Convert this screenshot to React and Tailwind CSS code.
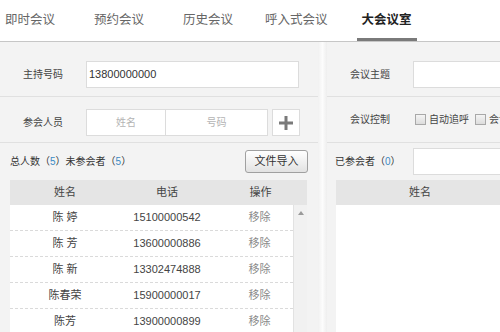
import React from "react";

const FONT = { fontFamily: '"Liberation Sans", "Noto Sans CJK SC", sans-serif' };

const tabs = [
  { label: "即时会议", ml: "ml-[5px]" },
  { label: "预约会议", ml: "ml-[39px]" },
  { label: "历史会议", ml: "ml-[39px]" },
  { label: "呼入式会议", ml: "ml-[32px]" },
];

const people = [
  { name: "陈 婷", phone: "15100000542" },
  { name: "陈 芳", phone: "13600000886" },
  { name: "陈 新", phone: "13302474888" },
  { name: "陈春荣", phone: "15900000017" },
  { name: "陈芳", phone: "13900000899" },
];

function Check({ label }) {
  return (
    <label className="flex items-center gap-[3px] shrink-0">
      <span className="w-[11px] h-[11px] border border-[#a8a8a8] bg-gradient-to-b from-[#f4f4f4] to-[#dcdcdc]" />
      <span>{label}</span>
    </label>
  );
}

function Row({ label, children, className = "" }) {
  return (
    <div className={`flex items-center border-b border-[#e0e0e0] ${className}`}>
      <div className="w-[86px] shrink-0 text-center text-[10px] text-[#444]">{label}</div>
      {children}
    </div>
  );
}

export default function App() {
  return (
    <div className="w-[500px] h-[332px] overflow-hidden bg-[#f3f3f3] flex flex-col" style={FONT}>
      <nav className="h-[41px] shrink-0 bg-white flex items-stretch text-[12.5px] text-[#666]">
        {tabs.map((t) => (
          <div key={t.label} className={`flex items-center ${t.ml}`}>
            {t.label}
          </div>
        ))}
        <div className="ml-[29px] px-[5px] pt-[3px] flex items-center border-b-[3px] border-[#7a7a7a] text-[#222] font-semibold">
          大会议室
        </div>
      </nav>
      <div className="h-px bg-[#c6c6c6] shrink-0" />

      <div className="flex flex-1 min-h-0">
        {/* left: host and participants */}
        <section className="w-[318px] shrink-0 flex flex-col">
          <Row label="主持号码" className="pt-[19px] pb-[8px]">
            <div className="w-[213px] h-[27px] flex items-center px-[2px] bg-white border border-[#dcdcdc] text-[11px] text-[#333]">
              13800000000
            </div>
          </Row>
          <Row label="参会人员" className="pt-[12px] pb-[6px]">
            <div className="flex h-[27px]">
              <div className="w-[80px] flex items-center justify-center bg-white border border-[#dcdcdc] text-[10px] text-[#b4b4b4]">
                姓名
              </div>
              <div className="w-[102px] flex items-center justify-center bg-white border border-l-0 border-[#dcdcdc] text-[10px] text-[#b4b4b4]">
                号码
              </div>
              <button className="ml-[4px] w-[28px] flex items-center justify-center bg-white border border-[#dcdcdc]">
                <svg width="14" height="14" viewBox="0 0 14 14">
                  <rect x="5.5" y="0" width="3" height="14" fill="#7a7a7a" />
                  <rect x="0" y="5.5" width="14" height="3" fill="#7a7a7a" />
                </svg>
              </button>
            </div>
          </Row>
          <div className="h-[37px] shrink-0 flex items-center justify-between pl-[10px] pr-[10px] text-[10px] text-[#333]">
            <span>
              总人数（<span className="text-[#3a8ac4]">5</span>）未参会者（<span className="text-[#3a8ac4]">5</span>）
            </span>
            <button className="w-[63px] h-[23px] rounded-[3px] border border-[#a0a0a0] bg-gradient-to-b from-white to-[#e2e2e2] text-[11px] text-[#333]">
              文件导入
            </button>
          </div>

          <div className="ml-[10px] w-[297px] flex flex-col flex-1 min-h-0">
            <div className="h-[25px] shrink-0 flex items-center bg-[#e5e5e5] text-[11px] text-[#444]">
              <div className="w-[110px] text-center">姓名</div>
              <div className="w-[94px] text-center">电话</div>
              <div className="flex-1 text-center">操作</div>
            </div>
            <div className="flex flex-1 min-h-0 bg-white">
              <div className="flex-1">
                {people.map((p) => (
                  <div
                    key={p.phone}
                    className="h-[26px] flex items-center border-b border-dashed border-[#dadada] text-[11px] text-[#444]"
                  >
                    <div className="w-[110px] text-center">{p.name}</div>
                    <div className="w-[94px] text-center">{p.phone}</div>
                    <div className="flex-1 pl-[12px] text-center text-[#8a8a8a]">移除</div>
                  </div>
                ))}
              </div>
              <div className="w-[14px] shrink-0 bg-[#f1f1f1] border-l border-[#e2e2e2] flex justify-center pt-[6px]">
                <svg width="6" height="4" viewBox="0 0 6 4">
                  <path d="M0 4 L3 0 L6 4 Z" fill="#9a9a9a" />
                </svg>
              </div>
            </div>
          </div>
        </section>

        <div className="w-[9px] shrink-0 bg-gradient-to-r from-[#f1f1f1] via-[#fcfcfc] to-[#eeeeee]" />

        {/* right: meeting settings */}
        <section className="flex-1 min-w-0 overflow-hidden flex flex-col">
          <Row label="会议主题" className="pt-[19px] pb-[8px] w-[400px]">
            <div className="w-[200px] h-[27px] bg-white border border-[#dcdcdc]" />
          </Row>
          <Row label="会议控制" className="h-[46px] w-[400px] text-[10px] text-[#444]">
            <div className="flex items-center gap-[6px] pl-[2px]">
              <Check label="自动追呼" />
              <Check label="会议录音" />
            </div>
          </Row>
          <div className="h-[37px] shrink-0 flex items-center w-[400px] text-[10px] text-[#333]">
            <div className="w-[86px] shrink-0 pl-[8px]">
              已参会者（<span className="text-[#3a8ac4]">0</span>）
            </div>
            <div className="w-[200px] h-[27px] bg-white border border-[#dcdcdc]" />
          </div>
          <div className="ml-[9px] w-[400px] flex flex-col flex-1 bg-white">
            <div className="h-[25px] shrink-0 flex items-center bg-[#e5e5e5] text-[11px] text-[#444]">
              <div className="w-[168px] text-center">姓名</div>
              <div className="w-[100px] text-center">电话</div>
            </div>
          </div>
        </section>
      </div>
    </div>
  );
}
